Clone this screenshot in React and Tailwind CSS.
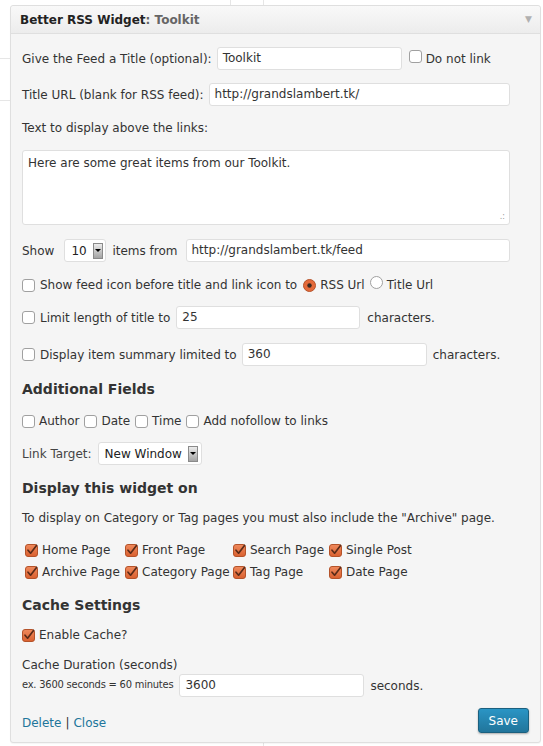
import React from "react";

const FONT = { fontFamily: '"DejaVu Sans", Verdana, sans-serif' };

const Box = ({ checked }) =>
  checked ? (
    <svg width="13" height="13" viewBox="0 0 13 13" className="shrink-0">
      <defs>
        <linearGradient id="cbg" x1="0" y1="0" x2="0" y2="1">
          <stop offset="0" stopColor="#f08a5d" />
          <stop offset="1" stopColor="#d9602f" />
        </linearGradient>
      </defs>
      <rect x="0.5" y="0.5" width="12" height="12" rx="2.5" fill="url(#cbg)" stroke="#b4532a" />
      <path d="M3 6.2 L5.6 9.2 L11.5 1.5" stroke="#5a2b18" strokeWidth="1.7" fill="none" strokeLinecap="round" strokeLinejoin="round" />
    </svg>
  ) : (
    <span className="inline-block shrink-0 w-[13px] h-[13px] rounded-[3px] border border-[#a0a0a0] bg-white" />
  );

const Radio = ({ checked }) =>
  checked ? (
    <svg width="13" height="13" viewBox="0 0 13 13" className="shrink-0">
      <circle cx="6.5" cy="6.5" r="6" fill="#e56a3a" stroke="#b4532a" />
      <circle cx="6.5" cy="6.5" r="2.2" fill="#3a2a22" />
    </svg>
  ) : (
    <span className="inline-block shrink-0 w-[13px] h-[13px] rounded-full border border-[#a0a0a0] bg-white" />
  );

const Field = ({ value, className }) => (
  <div className={`h-[23px] bg-white border border-[#dfdfdf] rounded-[3px] px-[5px] leading-[20px] text-[#333] whitespace-nowrap ${className}`}>
    {value}
  </div>
);

const Select = ({ value, className }) => (
  <div className={`h-[23px] bg-white border border-[#dfdfdf] rounded-[3px] flex items-center pl-[6px] pr-[3px] gap-[6px] text-[#222] whitespace-nowrap ${className}`}>
    <span>{value}</span>
    <span className="ml-auto shrink-0 w-[10px] h-[16px] border border-[#8a8a8a] bg-gradient-to-b from-[#ececec] to-[#a4a4a4] flex items-center justify-center">
      <span className="block w-0 h-0 border-l-[3px] border-r-[3px] border-t-[3px] border-l-transparent border-r-transparent border-t-black" />
    </span>
  </div>
);

const Opt = ({ label, checked = true }) => (
  <div className="flex items-center gap-[4px]">
    <Box checked={checked} />
    <span>{label}</span>
  </div>
);

export default function App() {
  return (
    <div className="relative w-[543px] h-[746px] bg-white overflow-hidden" style={FONT}>
      {/* page bits peeking out behind the widget */}
      <div className="absolute left-[230px] top-0 h-[6px] border-l border-[#e6e6e6]" />
      <div className="absolute left-[263px] top-0 h-[6px] border-l border-[#e6e6e6]" />
      <div className="absolute left-[263px] bottom-0 h-[6px] border-l border-[#e6e6e6]" />
      <div className="absolute left-0 top-[58px] w-[10px] border-t border-[#e6e6e6]" />
      <div className="absolute left-0 top-[100px] w-[10px] border-t border-[#e6e6e6]" />

      <div className="relative ml-[10px] mt-[5px] w-[531px] border border-[#dfdfdf] rounded-[3px] bg-[#f5f5f5] text-[12px] text-[#333] shadow-[0_1px_1px_rgba(0,0,0,0.04)]">
        <div className="h-[28px] flex items-center pl-[9px] pr-[8px] bg-gradient-to-b from-[#f9f9f9] to-[#ececec] border-b border-[#dfdfdf] rounded-t-[3px]">
          <span className="font-bold text-[#222]">Better RSS Widget</span>
          <span className="font-bold text-[#666]">: Toolkit</span>
          <span className="ml-auto text-[#b0b0b0] text-[9px]">▼</span>
        </div>

        <div className="pl-[11px] pr-[30px]">
          <div className="mt-[13px] flex items-center">
            <span>Give the Feed a Title (optional):</span>
            <Field value="Toolkit" className="ml-[5px] w-[185px]" />
            <span className="ml-[7px]"><Box /></span>
            <span className="ml-[4px]">Do not link</span>
          </div>

          <div className="mt-[13px] flex items-center">
            <span>Title URL (blank for RSS feed):</span>
            <Field value="http://grandslambert.tk/" className="ml-[5px] flex-1" />
          </div>

          <p className="mt-[14px] leading-[16px]">Text to display above the links:</p>

          <div className="relative mt-[14px] h-[75px] bg-white border border-[#dfdfdf] rounded-[3px] px-[5px] py-[4px] leading-[16px]">
            Here are some great items from our Toolkit.
            <span className="absolute right-[4px] bottom-[3px] text-[8px] leading-[8px] text-[#999]">.:</span>
          </div>

          <div className="mt-[14px] flex items-center">
            <span>Show</span>
            <Select value="10" className="ml-[10px] w-[42px]" />
            <span className="ml-[6px]">items from</span>
            <Field value="http://grandslambert.tk/feed" className="ml-[8px] flex-1" />
          </div>

          <div className="mt-[15px] flex items-center h-[16px]">
            <Box />
            <span className="ml-[5px]">Show feed icon before title and link icon to</span>
            <span className="ml-[6px]"><Radio checked /></span>
            <span className="ml-[4px]">RSS Url</span>
            <span className="ml-[5px]"><Radio /></span>
            <span className="ml-[4px]">Title Url</span>
          </div>

          <div className="mt-[13px] flex items-center">
            <Box />
            <span className="ml-[5px]">Limit length of title to</span>
            <Field value="25" className="ml-[6px] w-[184px]" />
            <span className="ml-[7px]">characters.</span>
          </div>

          <div className="mt-[14px] flex items-center">
            <Box />
            <span className="ml-[5px]">Display item summary limited to</span>
            <Field value="360" className="ml-[5px] w-[185px]" />
            <span className="ml-[6px]">characters.</span>
          </div>

          <h3 className="mt-[14px] text-[14px] font-bold leading-[18px] text-[#333]">Additional Fields</h3>

          <div className="mt-[15px] flex items-center h-[16px] gap-[5px]">
            <Opt label="Author" checked={false} />
            <Opt label="Date" checked={false} />
            <Opt label="Time" checked={false} />
            <Opt label="Add nofollow to links" checked={false} />
          </div>

          <div className="mt-[13px] flex items-center">
            <span className="text-[#444]">Link Target:</span>
            <Select value="New Window" className="ml-[6px] w-[104px]" />
          </div>

          <h3 className="mt-[14px] text-[14px] font-bold leading-[18px] text-[#333]">Display this widget on</h3>

          <p className="mt-[13px] leading-[16px]">
            To display on Category or Tag pages you must also include the "Archive" page.
          </p>

          <div className="mt-[13px] ml-[3px] grid grid-cols-[100px_108px_96px_1fr] auto-rows-[22px] items-center">
            <Opt label="Home Page" />
            <Opt label="Front Page" />
            <Opt label="Search Page" />
            <Opt label="Single Post" />
            <Opt label="Archive Page" />
            <Opt label="Category Page" />
            <Opt label="Tag Page" />
            <Opt label="Date Page" />
          </div>

          <h3 className="mt-[13px] text-[14px] font-bold leading-[18px] text-[#333]">Cache Settings</h3>

          <div className="mt-[13px] flex items-center h-[16px]">
            <Opt label="Enable Cache?" />
          </div>

          <p className="mt-[14px] leading-[16px]">Cache Duration (seconds)</p>

          <div className="mt-[1px] flex items-center">
            <span className="text-[11px] tracking-[-0.2px]" style={{ fontFamily: '"DejaVu Sans Condensed", "DejaVu Sans", sans-serif' }}>
              ex. 3600 seconds = 60 minutes
            </span>
            <Field value="3600" className="ml-[6px] w-[185px]" />
            <span className="ml-[6px]">seconds.</span>
          </div>
        </div>

        <div className="flex items-center pl-[11px] pr-[11px] pb-[9px] mt-[11px]">
          <div className="pt-[4px]">
            <a href="#" className="text-[#21759b]">Delete</a>
            <span className="mx-[4px] text-[#333]">|</span>
            <a href="#" className="text-[#21759b]">Close</a>
          </div>
          <button className="ml-auto h-[25px] px-[10px] rounded-[3px] border border-[#1b607f] bg-gradient-to-b from-[#2a95c5] to-[#21759b] text-white text-[12px] shadow-[0_1px_2px_rgba(0,0,0,0.3)]">
            Save
          </button>
        </div>
      </div>
    </div>
  );
}
